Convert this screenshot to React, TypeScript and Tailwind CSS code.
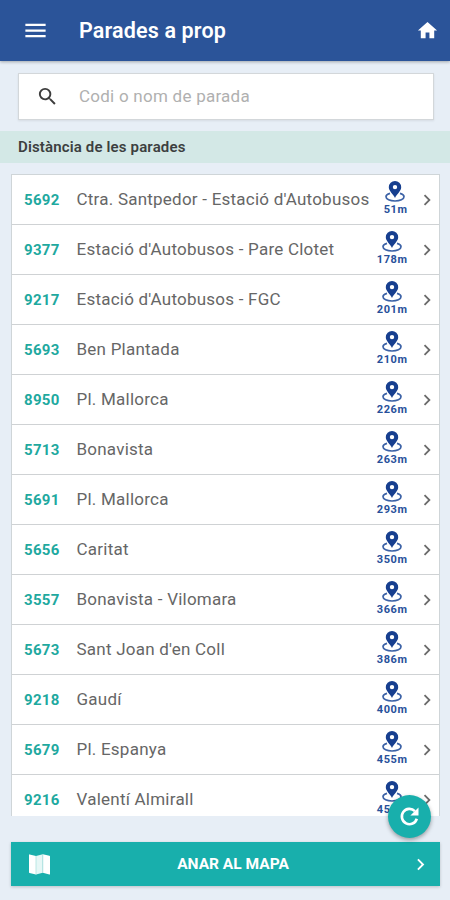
import { MdChevronRight, MdHome, MdMenu, MdSearch } from 'react-icons/md';

interface Stop {
  code: string;
  name: string;
  distance: string;
}

const stops: Stop[] = [
  { code: '5692', name: "Ctra. Santpedor - Estació d'Autobusos", distance: '51m' },
  { code: '9377', name: "Estació d'Autobusos - Pare Clotet", distance: '178m' },
  { code: '9217', name: "Estació d'Autobusos - FGC", distance: '201m' },
  { code: '5693', name: 'Ben Plantada', distance: '210m' },
  { code: '8950', name: 'Pl. Mallorca', distance: '226m' },
  { code: '5713', name: 'Bonavista', distance: '263m' },
  { code: '5691', name: 'Pl. Mallorca', distance: '293m' },
  { code: '5656', name: 'Caritat', distance: '350m' },
  { code: '3557', name: 'Bonavista - Vilomara', distance: '366m' },
  { code: '5673', name: "Sant Joan d'en Coll", distance: '386m' },
  { code: '9218', name: 'Gaudí', distance: '400m' },
  { code: '5679', name: 'Pl. Espanya', distance: '455m' },
  { code: '9216', name: 'Valentí Almirall', distance: '455m' },
];

// Pin standing inside an open ellipse
function StopPin() {
  return (
    <svg width="20" height="22" viewBox="0 0 20 22" fill="none">
      <path
        d="M5 12.400C2.500 13.100 1 14.300 1 15.800c0 2.400 4 4.200 9 4.200s9-1.800 9-4.200c0-1.500-1.500-2.700-4-3.400"
        stroke="#3c62a6"
        strokeWidth="1.700"
      />
      <path
        fillRule="evenodd"
        d="M10 0a6.200 6.200 0 0 0-6.200 6.200c0 4 4.600 6.800 6.200 10.800 1.600-4 6.200-6.800 6.200-10.800A6.200 6.200 0 0 0 10 0zm0 3.900a2.200 2.200 0 1 1 0 4.400 2.200 2.200 0 0 1 0-4.400z"
        fill="#173f8f"
      />
    </svg>
  );
}

function MapIcon() {
  return (
    <svg width="21" height="21" viewBox="0 0 21 21">
      <path d="M0 .8Q0 .2.600.400L7 2V20.600L.500 18.900Q0 18.700 0 18.200z" fill="#fff" />
      <path d="M7 2 13.800.200V18.800L7 20.600z" fill="#e6f7f6" />
      <path d="M13.800.200 20.400 1.800Q21 2 21 2.500V19.900Q21 20.600 20.400 20.400L13.800 18.800z" fill="#fff" />
      <path d="M7 2V20.600M13.800.200V18.800" stroke="#a5dedb" strokeWidth=".7" />
    </svg>
  );
}

function RefreshIcon() {
  return (
    <svg width="27" height="27" viewBox="0 0 24 24" fill="none">
      <path d="M16.800 7.200A6.800 6.800 0 1 0 18.500 14" stroke="#fff" strokeWidth="2.300" />
      <path d="M20 4v7.200h-7.200z" fill="#fff" />
    </svg>
  );
}

function StopRow({ stop }: { stop: Stop }) {
  return (
    <li className="flex h-[50px] shrink-0 items-center border-b border-[#cfd2d4] pl-[12px]">
      <span className="w-[52.5px] pt-px text-[15px] font-bold tracking-[0.3px] text-[#1fa99f]">{stop.code}</span>
      <span className="flex-1 whitespace-nowrap pt-px text-[17px] tracking-[0.23px] text-[#666]">{stop.name}</span>
      <div className="flex h-full flex-col items-center pt-[6px] text-[#27509a]">
        <StopPin />
        <span className="-mr-[0.6px] text-[11px] font-bold leading-[14px] tracking-[0.6px]">{stop.distance}</span>
      </div>
      <MdChevronRight className="ml-[9px] mr-px size-[22px] text-[#6b6b6b]" />
    </li>
  );
}

export default function App() {
  return (
    <div className="flex h-[900px] w-[450px] flex-col overflow-hidden bg-[#e7eef6] font-['Roboto',sans-serif]">
      <header className="z-10 flex h-[61px] shrink-0 items-center bg-[#2b5499] pl-[22px] pr-[11px] text-white shadow-[0_1px_3px_rgba(0,0,0,0.3)]">
        <MdMenu className="size-[27px]" />
        <h1 className="ml-[30px] flex-1 pt-px text-[21.5px] font-semibold tracking-[0.15px]">Parades a prop</h1>
        <MdHome className="size-[23px]" />
      </header>

      <div className="ml-[18px] mr-[16px] mt-[12px] flex h-[47px] shrink-0 items-center border border-[#d3d7da] bg-white pl-[17px] shadow-[0_1px_2px_rgba(0,0,0,0.08)]">
        <MdSearch className="size-[23px] text-[#3d3d3d]" />
        <input
          className="ml-[20px] flex-1 text-[17px] tracking-[0.25px] outline-none placeholder:text-[#b0b0b0]"
          placeholder="Codi o nom de parada"
        />
      </div>

      <h2 className="mt-[11px] flex h-[32px] shrink-0 items-center bg-[#d3e8e6] pl-[18px] text-[15px] font-semibold tracking-[0.15px] text-[#3c3f40]">
        Distància de les parades
      </h2>

      <div className="relative ml-[11px] mr-[10px] mt-[11px] h-[642px] shrink-0">
        <ul className="flex h-full flex-col overflow-hidden border-x border-t border-[#cfd5d8] bg-white">
          {stops.map((stop) => (
            <StopRow key={stop.code} stop={stop} />
          ))}
        </ul>
        <button className="absolute -bottom-[22px] right-[9px] flex size-[43px] items-center justify-center rounded-full bg-[#18afac] text-white shadow-[0_2px_4px_rgba(0,0,0,0.35)]">
          <RefreshIcon />
        </button>
      </div>

      <button className="ml-[11px] mr-[10px] mt-[26px] flex h-[44px] shrink-0 items-center bg-[#18afac] pl-[18px] pr-[8px] text-white shadow-[0_1px_3px_rgba(0,0,0,0.2)]">
        <MapIcon />
        <span className="flex-1 pl-[7px] pt-px text-center text-[15.5px] font-bold">ANAR AL MAPA</span>
        <MdChevronRight className="size-[23px]" />
      </button>
    </div>
  );
}
